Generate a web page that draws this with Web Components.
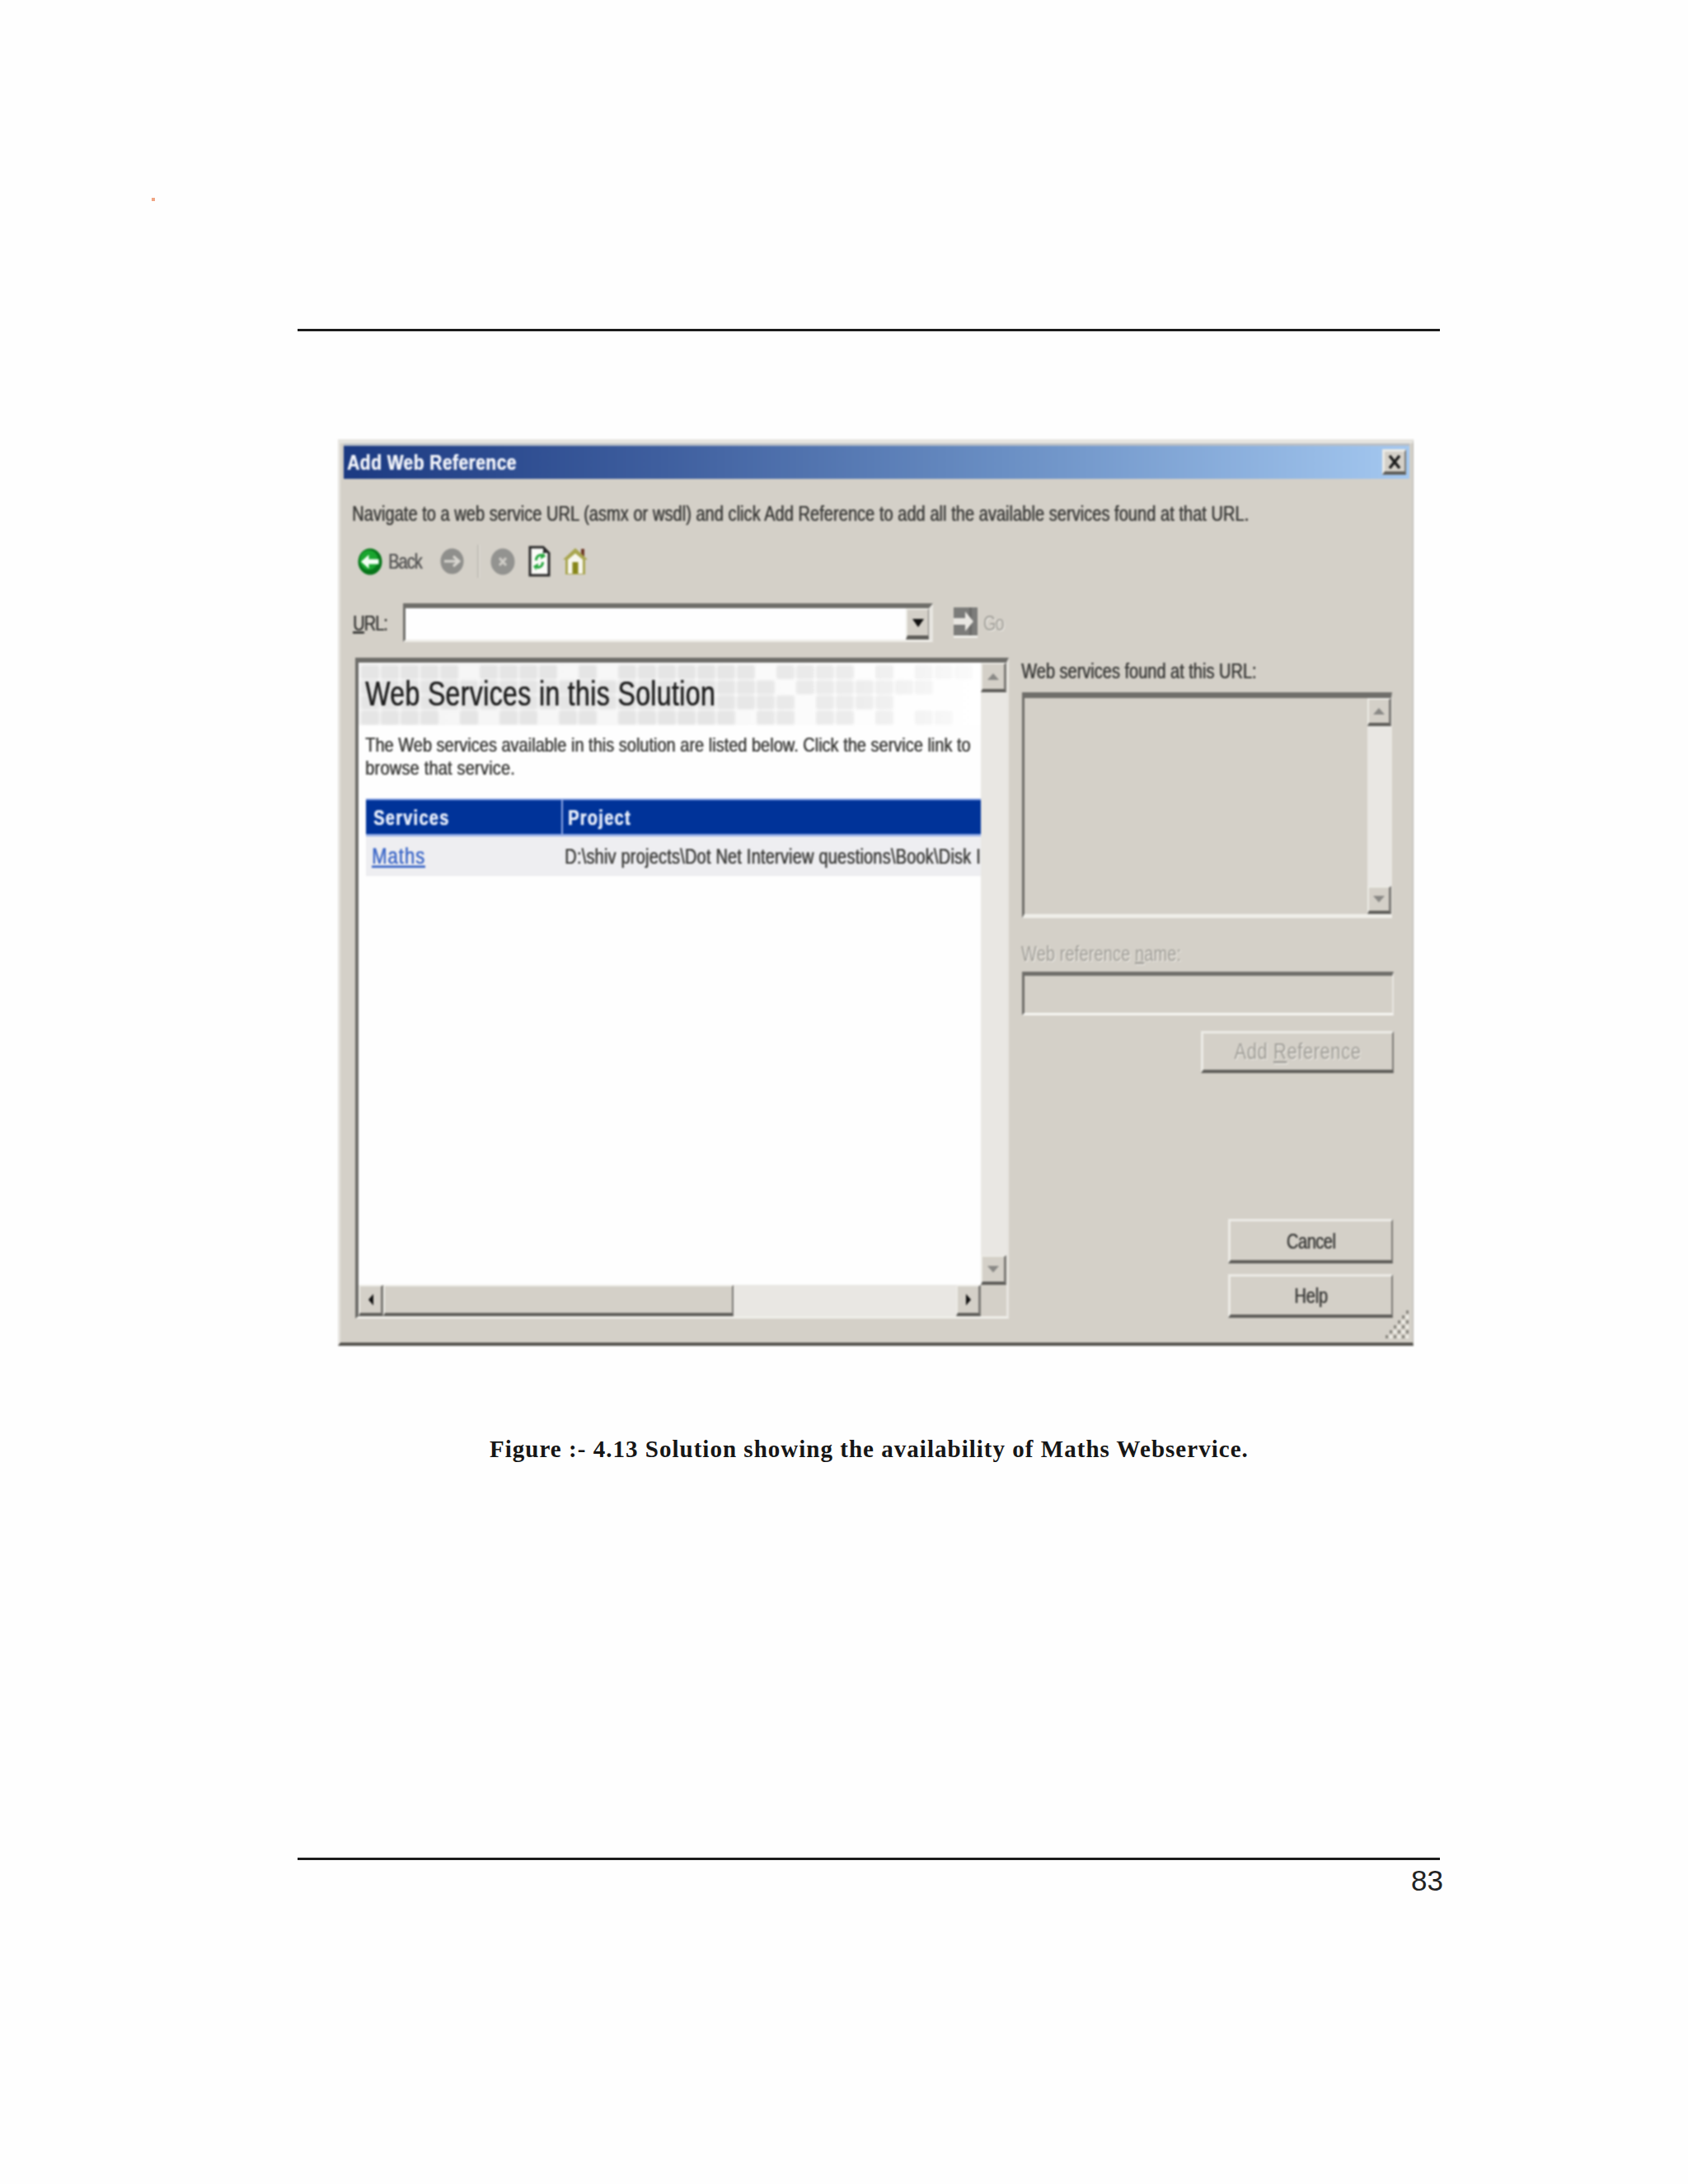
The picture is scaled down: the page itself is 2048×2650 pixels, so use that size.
<!DOCTYPE html>
<html>
<head>
<meta charset="utf-8">
<title>Add Web Reference</title>
<style>
  html, body { margin: 0; padding: 0; background: #fefefe; }
</style>
</head>
<body>
<book-page></book-page>
<script>
// small base: every element renders its static css + html into an open shadow root
class ShadowEl extends HTMLElement {
  constructor() {
    super()
    this.attachShadow({ mode: 'open' })
  }
  connectedCallback() {
    this.shadowRoot.innerHTML = `<style>${this.css()}</style>${this.html()}`
  }
  css() { return ':host { display: block; }' }
  html() { return '<slot></slot>' }
}

const BEVEL_UP = `
  background: #d4d0c8;
  border-style: solid;
  border-color: #ecebe6 #7c7a76 #5f5e5a #ecebe6;
  box-sizing: border-box;
`
const BEVEL_DOWN = `
  border-style: solid;
  border-color: #6f6e6a #e8e6e1 #efeee9 #6f6e6a;
  box-sizing: border-box;
`

// tall, squeezed text: the reference is a stretched low-res capture
class WinText extends ShadowEl {
  css() {
    return `:host {
      display: inline-block;
      font-family: "Liberation Sans", Arial, sans-serif;
      font-size: var(--fs, 20px);
      letter-spacing: var(--ls, 0.05px);
      line-height: 24px;
      white-space: nowrap;
      color: var(--fg, #3c3c3a);
      text-shadow: 0.5px 0 0 currentColor;
      transform: scaleY(var(--sy, 1.27));
      transform-origin: left center;
    }
    :host([disabled]) { color: #a09e98; text-shadow: 1px 1px 0 #f1efea; }`
  }
}
customElements.define('win-text', WinText)

class WinButton extends ShadowEl {
  css() {
    return `:host {
      ${BEVEL_UP}
      display: flex;
      align-items: center;
      justify-content: center;
      border-width: 3px 2px 4px 3px;
    }`
  }
}
customElements.define('win-button', WinButton)

class WinScrollbar extends ShadowEl {
  css() {
    return `:host {
      display: flex;
      flex-direction: column;
      background: #e9e7e3;
      box-sizing: border-box;
    }
    :host([horizontal]) { flex-direction: row; }
    .btn {
      ${BEVEL_UP}
      border-width: 2px 3px 4px 2px;
      flex: none;
      display: flex;
      align-items: center;
      justify-content: center;
    }
    .v { height: var(--btn, 36px); }
    .h { width: 30px; }
    .thumb { ${BEVEL_UP} border-width: 2px 2px 4px 2px; width: var(--thumb, 0); flex: none; }
    .gap { flex: 1; }
    svg { display: block; }`
  }
  html() {
    const col = this.getAttribute('arrow') || '#8a8986'
    if (this.hasAttribute('horizontal')) {
      return `<div class="btn h"><svg width="8" height="14" viewBox="0 0 8 14"><path d="M7 0v14L1 7z" fill="#111"/></svg></div>
        <div class="thumb"></div><div class="gap"></div>
        <div class="btn h"><svg width="8" height="14" viewBox="0 0 8 14"><path d="M1 0v14l6-7z" fill="#111"/></svg></div>`
    }
    return `<div class="btn v"><svg width="14" height="10" viewBox="0 0 14 10"><path d="M0 9h14L7 1z" fill="${col}"/></svg></div>
      <div class="gap"></div>
      <div class="btn v"><svg width="14" height="10" viewBox="0 0 14 10"><path d="M0 1h14L7 9z" fill="${col}"/></svg></div>`
  }
}
customElements.define('win-scrollbar', WinScrollbar)

class WinTitlebar extends ShadowEl {
  css() {
    return `:host {
      display: flex;
      align-items: center;
      justify-content: space-between;
      height: 40px;
      padding: 0 4px 0 4px;
      background: linear-gradient(90deg, #1c3a82 0%, #3f5f9f 30%, #6a8fc4 62%, #a4c8f0 100%);
      box-shadow: 0 -3px 0 #b9bfc6;
    }
    win-button { width: 29px; height: 31px; margin-bottom: 1px; }
    svg { display: block; }`
  }
  html() {
    return `<win-text style="--fs:21px;--ls:0.45px;--fg:#f2f4fa;--sy:1.22;font-weight:700">Add Web Reference</win-text>
      <win-button><svg width="16" height="17" viewBox="0 0 16 17"><path d="M2 1l12 15M14 1L2 16" stroke="#1c1c1c" stroke-width="3.4" fill="none"/></svg></win-button>`
  }
}
customElements.define('win-titlebar', WinTitlebar)

class WinToolbar extends ShadowEl {
  css() {
    return `:host {
      display: flex;
      align-items: center;
      height: 40px;
      padding-left: 17px;
    }
    svg { display: block; flex: none; }
    .back { margin-left: 7px; --ls: -1px; --fg: #555; }
    .sep { width: 3px; height: 40px; margin: 0 13px 0 16px; background: #c0bdb5; border-right: 1px solid #e4e2dc; box-sizing: border-box; flex: none; }`
  }
  html() {
    return `
      <svg width="30" height="33" viewBox="0 0 30 33">
        <ellipse cx="15" cy="16.500" rx="14.500" ry="16" fill="#07761a"/>
        <ellipse cx="13.500" cy="14.500" rx="11" ry="12" fill="#1aa52f"/>
        <path d="M4 16.500l9.500-8.500v5.500h12v6h-12v5.500z" fill="#f4fff4"/>
      </svg>
      <win-text class="back">Back</win-text>
      <svg style="margin-left:23px" width="29" height="32" viewBox="0 0 29 32">
        <ellipse cx="14.5" cy="16" rx="14" ry="15.5" fill="#8f8f8c"/>
        <path d="M5 16h17M16 10l7 6-7 6" fill="none" stroke="#d9d7d1" stroke-width="3"/>
      </svg>
      <div class="sep"></div>
      <svg width="30" height="33" viewBox="0 0 30 33">
        <ellipse cx="15" cy="16.5" rx="14.5" ry="16" fill="#939390"/>
        <path d="M11 12l8 9M19 12l-8 9" stroke="#cfcdc7" stroke-width="3" fill="none"/>
      </svg>
      <svg style="margin-left:16px" width="27" height="38" viewBox="0 0 27 38">
        <path d="M2 2h16l7 7v27H2z" fill="#fbfbf8" stroke="#2b2b2b" stroke-width="3"/>
        <path d="M18 2v7h7z" fill="#2b2b2b"/>
        <path d="M8 18c0-6 5-9 10-7.500l-1-3.500 4 6-6 3.500v-3.500c-2.500 0-4 2.500-4 5zM19 20c0 6-5 9-10 7.500l1 3.500-4-6 6-3.500v3.500c2.500 0 4-2.500 4-5z" fill="#27a83f"/>
      </svg>
      <svg style="margin-left:15px" width="30" height="34" viewBox="0 0 30 34">
        <path d="M22 2h4v10h-4z" fill="#6e3a28"/>
        <path d="M15 1L0 15h3v18h24V15h3z" fill="#a9a650"/>
        <path d="M6 15l9-7.500 9 7.500v17H6z" fill="#f7f6ee"/>
        <path d="M11.500 18h7v14h-7z" fill="#87861a"/>
      </svg>`
  }
}
customElements.define('win-toolbar', WinToolbar)

class UrlBar extends ShadowEl {
  css() {
    return `:host {
      display: flex;
      align-items: center;
      height: 47px;
      padding-left: 11px;
    }
    .label { width: 61px; flex: none; --ls: -1px; }
    .combo {
      ${BEVEL_DOWN}
      width: 643px;
      height: 47px;
      border-width: 6px 5px 3px 3px;
      background: #fefefe;
      display: flex;
      justify-content: flex-end;
      flex: none;
    }
    win-button { width: 28px; border-width: 2px 1px 5px 2px; }
    .go { margin-left: 25px; display: flex; align-items: center; }
    svg { display: block; }
    .gotxt { margin-left: 7px; --ls: -1.1px; }`
  }
  html() {
    return `<win-text class="label"><u>U</u>RL:</win-text>
      <div class="combo">
        <win-button><svg width="14" height="12" viewBox="0 0 14 12"><path d="M0 1h14L7 11z" fill="#111"/></svg></win-button>
      </div>
      <div class="go">
        <svg width="29" height="37" viewBox="0 0 29 37">
          <rect width="29" height="34" fill="#7c7c7a"/>
          <rect x="19" y="0" width="3" height="34" fill="#6a6a68"/>
          <path d="M0 13h14V5l10 12-10 12v-8H0z" fill="#e9e7e2"/>
          <rect y="34" width="29" height="3" fill="#f0efea"/>
        </svg>
        <win-text class="gotxt" disabled>Go</win-text>
      </div>`
  }
}
customElements.define('url-bar', UrlBar)

// checker backdrop of the page header, one string per row of 24px cells
class HeaderPattern extends ShadowEl {
  css() {
    return `:host {
      position: absolute;
      inset: 0;
      display: block;
      background: linear-gradient(90deg, #f5f5f5 0%, #f8f8f8 55%, #ffffff 100%);
    }
    svg { display: block; filter: blur(1px); }
    .fade { position: absolute; inset: 0; background: linear-gradient(90deg, rgba(255,255,255,0) 55%, rgba(255,255,255,.3) 80%, rgba(255,255,255,.85) 100%); }`
  }
  html() {
    const rows = [
      '1111101111010111111101111010' + '111',
      '1111111111111111111110111111' + '100',
      '1111111111111111111111011110' + '000',
      '1111010110110111111011011010' + '110'
    ]
    let cells = ''
    rows.forEach((row, r) => {
      ;[...row].forEach((c, i) => {
        if (c === '1') cells += `<rect x="${3 + i * 24}" y="${3 + r * 18.4}" width="22" height="17" rx="3" fill="#e5e5e5"/>`
      })
    })
    return `<svg width="755" height="76" viewBox="0 0 755 76">${cells}</svg><div class="fade"></div>`
  }
}
customElements.define('header-pattern', HeaderPattern)

class ServicesTable extends ShadowEl {
  css() {
    return `:host {
      display: grid;
      grid-template-columns: 237px 1fr;
      grid-template-rows: 46px 48px;
      margin-left: 9px;
      overflow: hidden;
    }
    .th {
      background: #003399;
      border-top: 2px solid #7f9ce0;
      border-bottom: 3px solid #9db4e8;
      box-sizing: border-box;
      display: flex;
      align-items: center;
      padding-left: 9px;
      --fg: #e8eefb;
      --ls: 1.25px;
    }
    .th + .th { border-left: 2px solid #8fa8e4; padding-left: 6px; }
    .td {
      background: #eeeef1;
      display: flex;
      align-items: center;
      overflow: hidden;
      padding-left: 7px;
    }
    .td + .td { padding-left: 4px; }
    .link { --fs: 22px; --ls: 1px; --fg: #3d68c8; }
    .path { --ls: 0.2px; }`
  }
  html() {
    return `<div class="th"><win-text style="font-weight:700">Services</win-text></div>
      <div class="th"><win-text style="font-weight:700">Project</win-text></div>
      <div class="td"><win-text class="link"><u>Maths</u></win-text></div>
      <div class="td"><win-text class="path">D:\\shiv projects\\Dot Net Interview questions\\Book\\Disk I</win-text></div>`
  }
}
customElements.define('services-table', ServicesTable)

class BrowserPane extends ShadowEl {
  css() {
    return `:host {
      ${BEVEL_DOWN}
      display: grid;
      grid-template-columns: 755px 31px;
      grid-template-rows: 755px 38px;
      width: 793px;
      height: 802px;
      border-width: 6px 3px 3px 4px;
      background: #d4d0c8;
      flex: none;
    }
    .view { background: #fefefe; overflow: hidden; }
    .head {
      position: relative;
      height: 76px;
      display: flex;
      align-items: center;
      padding-left: 8px;
    }
    .head win-text { position: relative; --fs: 32px; --ls: 0.38px; --fg: #1e1e1e; --sy: 1.3; }
    .para { padding: 10px 0 0 8px; --ls: 0px; }
    .para win-text { display: block; line-height: 28px; height: 28px; --sy: 1.2; }
    .para win-text + win-text { --ls: 0.2px; }
    services-table { margin-top: 23px; }
    .hbar { --thumb: 425px; }`
  }
  html() {
    return `<div class="view">
        <div class="head"><header-pattern></header-pattern><win-text>Web Services in this Solution</win-text></div>
        <div class="para">
          <win-text>The Web services available in this solution are listed below. Click the service link to</win-text>
          <win-text>browse that service.</win-text>
        </div>
        <services-table></services-table>
      </div>
      <win-scrollbar></win-scrollbar>
      <win-scrollbar class="hbar" horizontal></win-scrollbar>
      <div></div>`
  }
}
customElements.define('browser-pane', BrowserPane)

class SidePanel extends ShadowEl {
  css() {
    return `:host {
      display: flex;
      flex-direction: column;
      align-items: flex-start;
      width: 460px;
      height: 802px;
      padding-top: 4px;
      box-sizing: border-box;
    }
    .found { --ls: 0px; }
    .list {
      ${BEVEL_DOWN}
      width: 449px;
      height: 274px;
      margin: 14px 0 0 1px;
      border-width: 7px 1px 5px 3px;
      display: flex;
      justify-content: flex-end;
      flex: none;
    }
    .list win-scrollbar { width: 29px; --btn: 34px; }
    .name { margin-top: 31px; --ls: 0.12px; }
    .input {
      ${BEVEL_DOWN}
      width: 451px;
      height: 53px;
      margin: 10px 0 0 1px;
      border-width: 5px 2px 3px 3px;
      border-bottom-color: #f7f6f2;
      flex: none;
    }
    .add { width: 234px; height: 51px; margin: 19px 0 0 218px; flex: none; }
    .cancel { width: 200px; height: 54px; margin: auto 0 0 251px; flex: none; }
    .help { width: 200px; height: 53px; margin: 13px 0 1px 251px; flex: none; }
    .cancel win-text { --ls: -0.5px; }
    .help win-text { --ls: -0.2px; }
    .add win-text { --fs: 22px; --ls: 0.55px; }`
  }
  html() {
    return `<win-text class="found">Web services found at this URL:</win-text>
      <div class="list"><win-scrollbar></win-scrollbar></div>
      <win-text class="name" disabled>Web reference <u>n</u>ame:</win-text>
      <div class="input"></div>
      <win-button class="add"><win-text disabled>Add <u>R</u>eference</win-text></win-button>
      <win-button class="cancel"><win-text>Cancel</win-text></win-button>
      <win-button class="help"><win-text>Help</win-text></win-button>`
  }
}
customElements.define('side-panel', SidePanel)

class ResizeGrip extends ShadowEl {
  css() {
    return `:host {
      position: absolute;
      right: 3px;
      bottom: 3px;
      width: 30px;
      height: 36px;
      display: block;
    }
    svg { display: block; }`
  }
  html() {
    let dots = ''
    for (let r = 0; r < 6; r++) {
      for (let c = 5 - r; c < 6; c++) {
        dots += `<rect x="${c * 5}" y="${r * 6}" width="3" height="4" fill="${(r + c) % 2 ? '#88867f' : '#f0efe9'}"/>`
      }
    }
    return `<svg width="30" height="36" viewBox="0 0 30 36">${dots}</svg>`
  }
}
customElements.define('resize-grip', ResizeGrip)

class AddWebReferenceDialog extends ShadowEl {
  css() {
    return `:host {
      position: relative;
      display: block;
      box-sizing: border-box;
      width: 1305px;
      height: 1100px;
      margin-left: 410px;
      padding: 3px 4px 0 4px;
      background: #d4d0c8;
      border-style: solid;
      border-width: 5px 1px 4px 3px;
      border-color: #e6e4df #b5b3ad #55544f #e6e4df;
      filter: blur(0.8px);
    }
    .msg { margin: 30px 0 26px 10px; display: block; }
    url-bar { margin-top: 31px; }
    .main { display: flex; gap: 15px; margin: 19px 0 0 14px; }`
  }
  html() {
    return `<win-titlebar></win-titlebar>
      <win-text class="msg">Navigate to a web service URL (asmx or wsdl) and click Add Reference to add all the available services found at that URL.</win-text>
      <win-toolbar></win-toolbar>
      <url-bar></url-bar>
      <div class="main">
        <browser-pane></browser-pane>
        <side-panel></side-panel>
      </div>
      <resize-grip></resize-grip>`
  }
}
customElements.define('add-web-reference-dialog', AddWebReferenceDialog)

class PageRule extends ShadowEl {
  css() {
    return `:host {
      display: block;
      width: 1386px;
      height: 3px;
      margin-left: 361px;
      background: #1c1c1c;
      filter: blur(0.4px);
    }`
  }
}
customElements.define('page-rule', PageRule)

class BookPage extends ShadowEl {
  css() {
    return `:host {
      display: block;
      width: 2048px;
      height: 2650px;
      overflow: hidden;
      background: #fefefe;
    }
    .speck { width: 4px; height: 4px; margin: 240px 0 0 184px; background: #f0a584; }
    .rule-top { margin-top: 155px; }
    add-web-reference-dialog { margin-top: 131px; }
    .caption {
      margin-top: 107px;
      padding-left: 594px;
      font: 700 29px/36px "Liberation Serif", "Times New Roman", serif;
      letter-spacing: 1.02px;
      color: #161616;
      white-space: nowrap;
    }
    .rule-bottom { margin-top: 478px; }
    .num {
      width: 1751px;
      margin-top: 5px;
      text-align: right;
      font: 35px/40px "Liberation Sans", Arial, sans-serif;
      color: #222;
    }`
  }
  html() {
    return `<div class="speck"></div>
      <page-rule class="rule-top"></page-rule>
      <add-web-reference-dialog></add-web-reference-dialog>
      <div class="caption">Figure :- 4.13 Solution showing the availability of Maths Webservice.</div>
      <page-rule class="rule-bottom"></page-rule>
      <div class="num">83</div>`
  }
}
customElements.define('book-page', BookPage)
</script>
</body>
</html>
